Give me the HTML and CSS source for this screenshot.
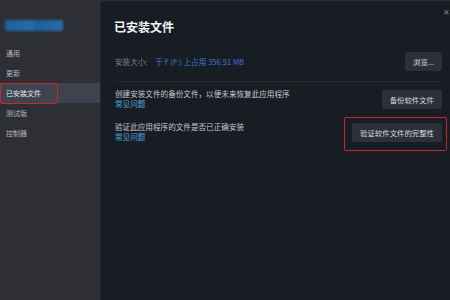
FILE: index.html
```html
<!DOCTYPE html>
<html lang="zh-CN">
<head>
    <meta charset="UTF-8">
    <title>已安装文件</title>
    <link rel="stylesheet" href="styles.css">
</head>
<body>
    <div class="window">
        <div class="sidebar">
            <div class="game-name">游戏名称</div>
            <ul class="nav">
                <li>通用</li>
                <li>更新</li>
                <li class="active marked">已安装文件</li>
                <li>测试版</li>
                <li>控制器</li>
            </ul>
        </div>

        <div class="main">
            <span class="close">✕</span>
            <h1>已安装文件</h1>

            <div class="row size-row">
                <p class="size"><span class="label">安装大小:</span> <span class="value">于 F (F:) 上占用 356.91 MB</span></p>
                <button class="btn">浏览...</button>
            </div>

            <div class="divider"></div>

            <div class="row">
                <div class="info">
                    <p>创建安装文件的备份文件，以便未来恢复此应用程序</p>
                    <a href="#" class="faq">常见问题</a>
                </div>
                <button class="btn">备份软件文件</button>
            </div>

            <div class="row">
                <div class="info">
                    <p>验证此应用程序的文件是否已正确安装</p>
                    <a href="#" class="faq">常见问题</a>
                </div>
                <button class="btn marked">验证软件文件的完整性</button>
            </div>
        </div>
    </div>
</body>
</html>
```

FILE: styles.css
```css
* {
    margin: 0;
    padding: 0;
    box-sizing: border-box;
}

body {
    font-family: 'Noto Sans CJK SC', 'Noto Sans', sans-serif;
    background: #181c23;
    width: 450px;
    height: 300px;
    overflow: hidden;
}

.window {
    display: flex;
    height: 300px;
}

.sidebar {
    width: 101px;
    background: #2e2f34;
    border-right: 1px solid #222529;
    padding-top: 20px;
}

.game-name {
    margin-left: 5px;
    width: 58px;
    height: 11px;
    background: linear-gradient(90deg, #1d5f9e 0%, #2a6aa6 45%, #1e5d99 55%, #2b6ca8 100%);
    color: transparent;
    font-size: 8px;
    filter: blur(1px);
    border-radius: 2px;
}

.nav {
    list-style: none;
    margin-top: 12px;
}

.nav li {
    height: 20px;
    line-height: 20px;
    padding-left: 6px;
    font-size: 7px;
    color: #b4b8bf;
}

.nav li.active {
    background: #3e4350;
    color: #e6e8eb;
}

.marked {
    position: relative;
}

.nav li.marked::after {
    content: '';
    position: absolute;
    left: 0;
    top: 0;
    width: 56px;
    height: 19px;
    border: 1.5px solid #c7262b;
    border-radius: 2px;
}

.main {
    flex: 1;
    position: relative;
    padding: 19px 8px 0 13px;
    border-top: 1px solid #2a2e35;
}

.close {
    position: absolute;
    right: 0;
    top: 5px;
    font-size: 8px;
    color: #80868f;
}

h1 {
    font-size: 12px;
    line-height: 14px;
    color: #f2f3f5;
    font-weight: 700;
    margin-bottom: 18px;
}

.row {
    display: flex;
    justify-content: space-between;
    align-items: center;
    margin-bottom: 13px;
}

.size-row {
    margin-bottom: 0;
}

.size {
    font-size: 7.6px;
    padding-left: 1px;
}

.size .label {
    color: #7b8390;
    margin-right: 6px;
}

.size .value {
    color: #3c7cd4;
}

.divider {
    height: 1px;
    background: #262b33;
    margin: 10px 0 7px;
}

.info {
    font-size: 7.6px;
    line-height: 10px;
    padding-left: 1px;
}

.info p {
    color: #c4c8cf;
}

.faq {
    display: block;
    color: #4aa8de;
    text-decoration: none;
}

.btn {
    font-family: inherit;
    font-size: 7.4px;
    color: #d6d9de;
    background: #2b3039;
    border: none;
    border-radius: 2px;
    height: 19px;
    padding: 0 8px;
}

.btn.marked::after {
    content: '';
    position: absolute;
    left: -8px;
    top: -6px;
    right: -5px;
    bottom: -9px;
    border: 1.5px solid #c7262b;
    border-radius: 2px;
}
```
